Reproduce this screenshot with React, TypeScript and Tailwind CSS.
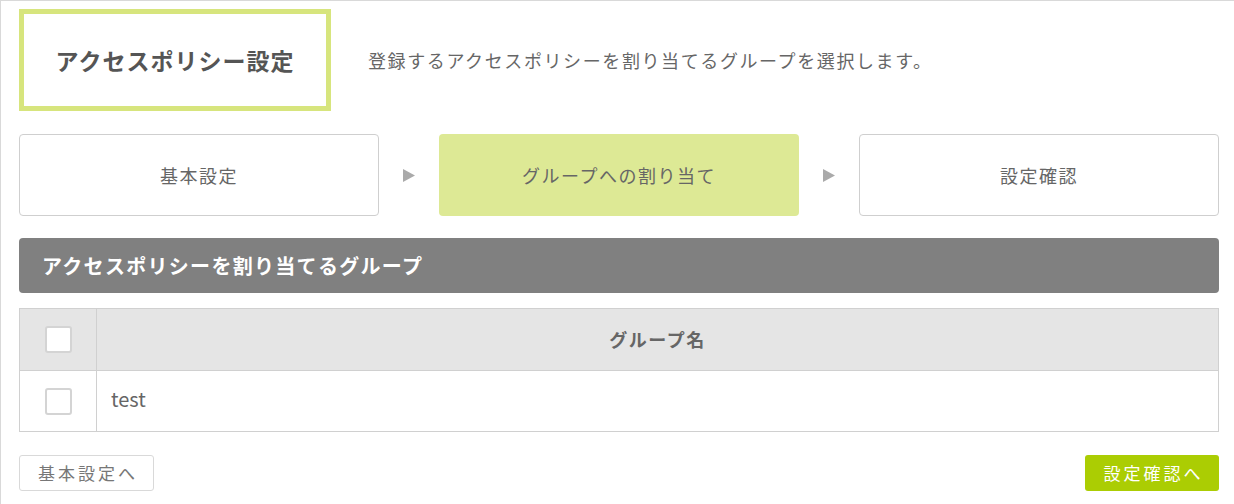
import { Fragment } from "react";

const steps = ["基本設定", "グループへの割り当て", "設定確認"];

const Checkbox = () => (
  <span className="block w-[27px] h-[27px] rounded-[3px] border-2 border-[#d4d4d4] bg-white"></span>
);

const App = () => {
  return (
    <div
      className="w-[1234px] h-[504px] bg-white border-l border-t border-[#d9d9d9] pl-[18px] pt-[8px] text-[#666]"
      style={{ fontFamily: '"Noto Sans CJK JP", "Noto Sans", sans-serif' }}
    >
      <div className="w-[1200px]">
        <div className="flex items-center">
          <div className="w-[312px] h-[102px] border-[5px] border-[#d7e57d] flex items-center justify-center">
            <h1 className="text-[23px] font-bold text-[#555] tracking-[1px]">アクセスポリシー設定</h1>
          </div>
          <p className="ml-[37px] text-[18px] text-[#666] tracking-[1.6px]">登録するアクセスポリシーを割り当てるグループを選択します。</p>
        </div>

        <div className="flex items-center mt-[23px]">
          {steps.map((s, i) => (
            <Fragment key={s}>
              {i > 0 && (
                <div className="w-[60px] flex justify-center">
                  <svg width="12" height="13" viewBox="0 0 12 13">
                    <path d="M0 0 L12 6.5 L0 13 Z" fill="#aaaaaa" />
                  </svg>
                </div>
              )}
              <div
                className={
                  i === 1
                    ? "w-[360px] h-[82px] rounded-[4px] bg-[#dde995] flex items-center justify-center text-[18px] tracking-[1.5px] text-[#666]"
                    : "w-[360px] h-[82px] rounded-[4px] border border-[#cfcfcf] bg-white flex items-center justify-center text-[18px] tracking-[1.5px] text-[#666]"
                }
              >
                {s}
              </div>
            </Fragment>
          ))}
        </div>

        <div className="mt-[22px] h-[55px] rounded-[4px] bg-[#808080] flex items-center pl-[23px]">
          <h2 className="text-[20px] font-bold text-white tracking-[1.3px]">アクセスポリシーを割り当てるグループ</h2>
        </div>

        <table className="mt-[15px] w-full border-collapse border border-[#d0d0d0]">
          <thead>
            <tr className="bg-[#e5e5e5] h-[62px]">
              <th className="w-[77px] border border-[#d0d0d0]">
                <div className="flex justify-center">
                  <Checkbox />
                </div>
              </th>
              <th className="border border-[#d0d0d0] text-[18px] tracking-[1.5px] font-bold text-[#666]">グループ名</th>
            </tr>
          </thead>
          <tbody>
            <tr className="h-[61px]">
              <td className="border border-[#d0d0d0]">
                <div className="flex justify-center">
                  <Checkbox />
                </div>
              </td>
              <td className="border border-[#d0d0d0] pl-[14px] pb-[4px] text-[20px] text-[#666]">test</td>
            </tr>
          </tbody>
        </table>

        <div className="flex justify-between mt-[23px]">
          <button className="w-[135px] h-[36px] rounded-[3px] border border-[#d9d9d9] bg-white text-[17px] text-[#777] tracking-[3px] pl-[3px]">
            基本設定へ
          </button>
          <button className="w-[134px] h-[36px] rounded-[3px] bg-[#abcd03] text-[17px] text-white tracking-[3px] pl-[3px]">
            設定確認へ
          </button>
        </div>
      </div>
    </div>
  );
};

export default App;
